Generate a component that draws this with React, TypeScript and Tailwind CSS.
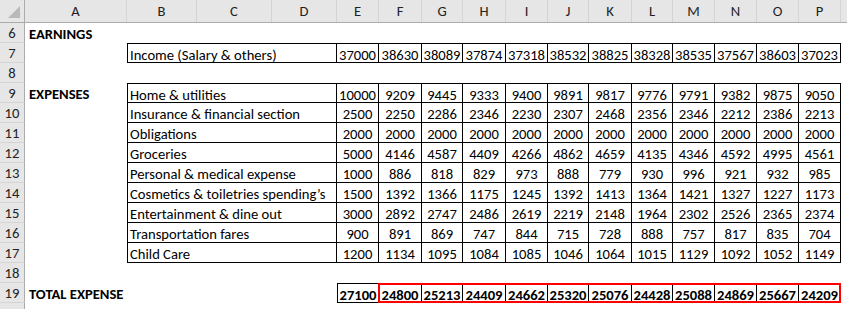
import React from "react";

const COLS = ["E", "F", "G", "H", "I", "J", "K", "L", "M", "N", "O", "P"];
const W = [
  "w-[42px]",
  "w-[43px]",
  "w-[41px]",
  "w-[43px]",
  "w-[42px]",
  "w-[41px]",
  "w-[43px]",
  "w-[41px]",
  "w-[42px]",
  "w-[42px]",
  "w-[42px]",
  "w-[42px]",
];

const income = [37000, 38630, 38089, 37874, 37318, 38532, 38825, 38328, 38535, 37567, 38603, 37023];

const expenses: [string, number[]][] = [
  ["Home & utilities", [10000, 9209, 9445, 9333, 9400, 9891, 9817, 9776, 9791, 9382, 9875, 9050]],
  ["Insurance & financial section", [2500, 2250, 2286, 2346, 2230, 2307, 2468, 2356, 2346, 2212, 2386, 2213]],
  ["Obligations", [2000, 2000, 2000, 2000, 2000, 2000, 2000, 2000, 2000, 2000, 2000, 2000]],
  ["Groceries", [5000, 4146, 4587, 4409, 4266, 4862, 4659, 4135, 4346, 4592, 4995, 4561]],
  ["Personal & medical expense", [1000, 886, 818, 829, 973, 888, 779, 930, 996, 921, 932, 985]],
  ["Cosmetics & toiletries spending\u2019s", [1500, 1392, 1366, 1175, 1245, 1392, 1413, 1364, 1421, 1327, 1227, 1173]],
  ["Entertainment & dine out", [3000, 2892, 2747, 2486, 2619, 2219, 2148, 1964, 2302, 2526, 2365, 2374]],
  ["Transportation fares", [900, 891, 869, 747, 844, 715, 728, 888, 757, 817, 835, 704]],
  ["Child Care", [1200, 1134, 1095, 1084, 1085, 1046, 1064, 1015, 1129, 1092, 1052, 1149]],
];

const total = [27100, 24800, 25213, 24409, 24662, 25320, 25076, 24428, 25088, 24869, 25667, 24209];

function RowNum({ n }: { n?: number }) {
  return (
    <div className="w-[25px] shrink-0 h-full bg-[#e6e6e6] border-r border-b border-r-[#ababab] border-b-[#d4d4d4] flex items-center justify-center text-[#222]">
      {n}
    </div>
  );
}

function Row({ n, children }: { n?: number; children?: React.ReactNode }) {
  return (
    <div className="flex h-[20px] leading-[22px]">
      <RowNum n={n} />
      {children}
    </div>
  );
}

function ColA({ text }: { text?: string }) {
  return <div className="w-[102px] shrink-0 pl-[4px] font-bold whitespace-nowrap">{text}</div>;
}

function DataRow({
  n,
  a,
  label,
  values,
  top,
}: {
  n: number;
  a?: string;
  label: string;
  values: number[];
  top?: boolean;
}) {
  const t = top ? "border-t" : "";
  return (
    <Row n={n}>
      <ColA text={a} />
      <div className={`w-[210px] shrink-0 pl-[2px] whitespace-nowrap border-l border-r border-b border-black ${t}`}>
        {label}
      </div>
      {values.map((v, i) => (
        <div key={i} className={`${W[i]} shrink-0 text-center border-r border-b border-black ${t}`}>
          {v}
        </div>
      ))}
    </Row>
  );
}

export default function App() {
  return (
    <div className="w-[847px] h-[309px] overflow-hidden bg-white text-black text-[14.6px] [font-family:Carlito,Lato,'Liberation_Sans',sans-serif]">
      {/* column header */}
      <div className="flex h-[23px] bg-[#e6e6e6] border-b border-[#ababab] text-[#222]">
        <div className="w-[25px] shrink-0 relative border-r border-[#ababab]">
          <div className="absolute right-[4px] bottom-[4px] w-0 h-0 border-l-[12px] border-l-transparent border-b-[12px] border-b-[#b9b9b9]" />
        </div>
        <div className="w-[102px] shrink-0 text-center leading-[23px] border-r border-[#d4d4d4]">A</div>
        <div className="w-[70px] shrink-0 text-center leading-[23px] border-r border-[#d4d4d4]">B</div>
        <div className="w-[75px] shrink-0 text-center leading-[23px] border-r border-[#d4d4d4]">C</div>
        <div className="w-[65px] shrink-0 text-center leading-[23px] border-r border-[#d4d4d4]">D</div>
        {COLS.map((c, i) => (
          <div key={c} className={`${W[i]} shrink-0 text-center leading-[23px] border-r border-[#d4d4d4]`}>
            {c}
          </div>
        ))}
        <div className="flex-1" />
      </div>

      <Row n={6}>
        <ColA text="EARNINGS" />
      </Row>
      <DataRow n={7} label="Income (Salary & others)" values={income} top />
      <Row n={8} />
      {expenses.map(([label, vals], i) => (
        <DataRow
          key={label}
          n={9 + i}
          a={i === 0 ? "EXPENSES" : undefined}
          label={label}
          values={vals}
          top={i === 0}
        />
      ))}
      <Row n={18} />
      <Row n={19}>
        <ColA text="TOTAL EXPENSE" />
        <div className="w-[210px] shrink-0" />
        <div className="w-[42px] shrink-0 text-center font-bold border border-black">{total[0]}</div>
        <div className="relative flex">
          {total.slice(1).map((v, i) => (
            <div key={i} className={`${W[i + 1]} shrink-0 text-center font-bold border-r border-y border-black`}>
              {v}
            </div>
          ))}
          <div className="absolute inset-y-0 left-[-1px] right-0 border-2 border-[#ff0000]" />
        </div>
      </Row>
      <Row />
    </div>
  );
}
